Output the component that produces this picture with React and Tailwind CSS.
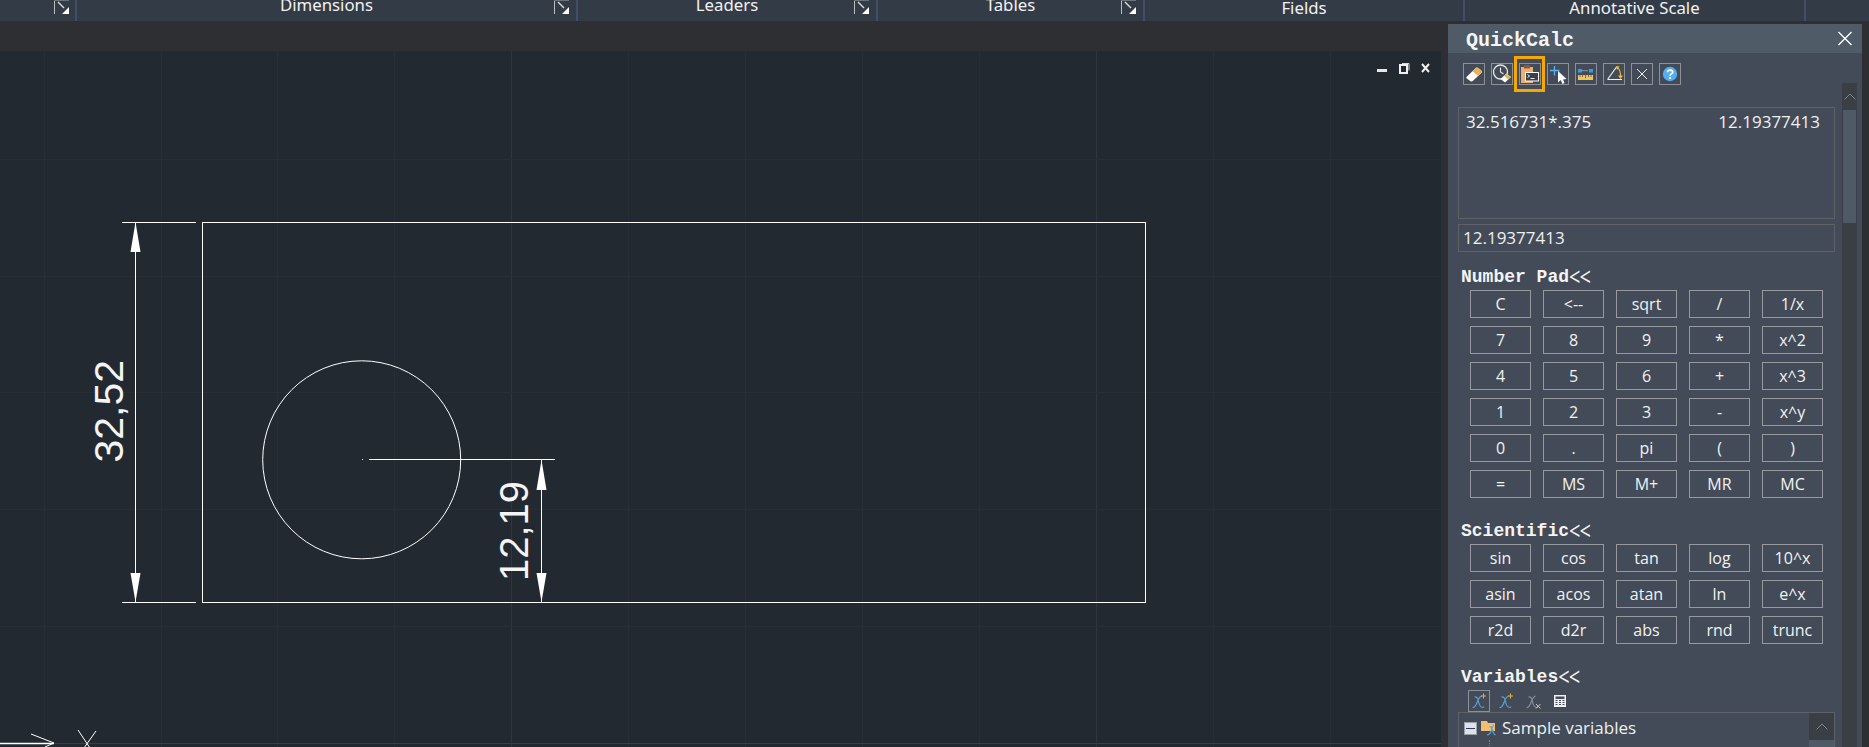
import React from 'react';

const ui = { fontFamily: '"Open Sans", "Noto Sans", sans-serif' };
const head = { fontFamily: '"Liberation Mono", monospace' };

const numberPad = [
  ['C', '<--', 'sqrt', '/', '1/x'],
  ['7', '8', '9', '*', 'x^2'],
  ['4', '5', '6', '+', 'x^3'],
  ['1', '2', '3', '-', 'x^y'],
  ['0', '.', 'pi', '(', ')'],
  ['=', 'MS', 'M+', 'MR', 'MC'],
];

const scientific = [
  ['sin', 'cos', 'tan', 'log', '10^x'],
  ['asin', 'acos', 'atan', 'ln', 'e^x'],
  ['r2d', 'd2r', 'abs', 'rnd', 'trunc'],
];

// dialog launcher in the ribbon panel titles
const Launcher = ({ className = 'right-[6px]' }) => (
  <svg width="16" height="15" viewBox="0 0 16 15" className={`absolute top-0 ${className}`}>
    <path d="M0.5 0V14" stroke="#b9bdc2" />
    <path d="M0 0.5H15" stroke="#6d737b" />
    <path d="M4 2L10 8" stroke="#d8dade" strokeWidth="1.4" />
    <path d="M15 7V14H8Z" fill="#fff" />
  </svg>
);

const RibbonCell = ({ w, label, launcher, launcherClass, low }) => (
  <div className={`relative h-full shrink-0 border-r-2 border-[#3f4f68] overflow-hidden ${w}`}>
    {label && (
      <div className={`text-center text-[16.8px] leading-[16px] text-[#f2f2f2] ${low ? 'pt-[0px]' : 'mt-[-3px]'}`}>
        {label}
      </div>
    )}
    {launcher && <Launcher className={launcherClass} />}
  </div>
);

// background grid + the drawing itself
const Drawing = () => {
  const xs = [44, 161, 277, 394, 511, 628, 745, 862, 979, 1096, 1213, 1330];
  const ys = [42, 159, 276, 392, 509, 626];
  const major = [511, 1096];
  const arrow = (x, tip, base) => `M${x} ${tip}L${x + 5} ${base}H${x - 5}Z`;
  return (
    <svg width="1441" height="696" viewBox="0 51 1441 696" className="block absolute left-0 top-0">
      {xs.map((x) => (
        <path key={x} d={`M${x + 0.5} 51V747`} stroke={major.includes(x) ? '#2e3640' : '#272e37'} />
      ))}
      {ys.map((y) => (
        <path key={y} d={`M0 ${y + 0.5}H1441`} stroke="#272e37" />
      ))}
      <path d="M0 743.5H1441" stroke="#363f4a" />

      <g stroke="#fff" fill="none" strokeWidth="1">
        <rect x="202.5" y="222.5" width="943" height="380" />
        <path d="M122 222.5H196M122 602.5H196M135.5 222V602" />
        <circle cx="361.7" cy="459.8" r="99" />
        <path d="M362 459.5H363M369 459.5H555M541.5 460V602" />
      </g>
      <g fill="#fff">
        <path d={arrow(135.5, 222, 252)} />
        <path d={arrow(135.5, 602, 573)} />
        <path d={arrow(541.5, 460, 490)} />
        <path d={arrow(541.5, 602, 573)} />
      </g>
      <text x="0" y="0" transform="translate(122.5 462.5) rotate(-90)" fill="#f4f4f4" fontSize="41" fontFamily="Liberation Sans">32,52</text>
      <text x="0" y="0" transform="translate(527.5 581) rotate(-90)" fill="#f4f4f4" fontSize="40" fontFamily="Liberation Sans">12,19</text>

      {/* UCS icon */}
      <g stroke="#fff" fill="none">
        <path d="M0 743.5H54" strokeWidth="1.5" />
        <path d="M31 734L54 743L45 747" />
        <path d="M78 730L90 748M96 731L84 748" />
      </g>
    </svg>
  );
};

const WindowControls = () => (
  <svg width="60" height="14" viewBox="0 0 60 14" className="absolute left-[1374px] top-[11px]">
    <rect x="3" y="7" width="10" height="3" fill="#e8e8e8" />
    <path d="M28 1.5H35V8.5" stroke="#d9d9d9" fill="none" />
    <rect x="26" y="3" width="7" height="8" fill="none" stroke="#f0f0f0" strokeWidth="2" />
    <path d="M48 2L55 10M55 2L48 10" stroke="#efefef" strokeWidth="2" fill="none" />
  </svg>
);

const ToolBtn = ({ children }) => (
  <div className="w-[22px] h-[22px] border border-[#8d9094] flex items-center justify-center">{children}</div>
);

const EraserIcon = () => (
  <svg width="20" height="20" viewBox="0 0 20 20">
    <path d="M2.5 13L11.5 4.2Q12.8 3 14.2 4L17.3 6.6Q18.5 7.8 17.3 9L9 16.8Q7.6 18 6.2 16.9L2.8 14.6Q1.7 13.8 2.5 13Z" fill="#fff" />
    <path d="M8.5 7.2L11.5 4.2Q12.8 3 14.2 4L17.3 6.6Q18.5 7.8 17.3 9L14.2 12Z" fill="#e4b35c" />
  </svg>
);

const ClockEraserIcon = () => (
  <svg width="20" height="20" viewBox="0 0 20 20">
    <circle cx="8.5" cy="8" r="7" fill="none" stroke="#e6e6e6" strokeWidth="1.3" />
    <path d="M8.5 3.5V8L11.5 10" fill="none" stroke="#e6e6e6" strokeWidth="1.1" />
    <path d="M8.5 15L14.5 9.5L19 13L13 18.5Z" fill="#fff" />
    <path d="M12 11.8L14.5 9.5L19 13L16.2 15.6Z" fill="#e4b35c" />
  </svg>
);

const ClipboardIcon = () => (
  <svg width="20" height="20" viewBox="0 0 20 20">
    <rect x="1" y="3" width="12" height="16" fill="#f0ad6e" />
    <rect x="4" y="1" width="6" height="3.5" fill="#8a5a3a" />
    <rect x="5.5" y="8.5" width="13" height="8.5" fill="#38414c" stroke="#fff" />
    <path d="M7.5 10.5L9.5 12L7.5 13.5M10.5 14.5H14.5" stroke="#fff" fill="none" strokeWidth="0.9" />
  </svg>
);

const PickIcon = () => (
  <svg width="20" height="20" viewBox="0 0 20 20">
    <path d="M6.5 2V11.5M2 6.5H11.5" stroke="#55b4f4" strokeWidth="1.3" />
    <path d="M10 7L18.5 15L15 15.5L16.5 19L14.5 20L12.7 16L10 18.5Z" fill="#fff" />
  </svg>
);

const RulerIcon = () => (
  <svg width="20" height="20" viewBox="0 0 20 20">
    <rect x="2" y="5" width="4" height="3.5" fill="#2f9fe8" />
    <rect x="13" y="5" width="4" height="3.5" fill="#2f9fe8" />
    <path d="M6.5 6.7H12.5" stroke="#e0e0e0" strokeDasharray="1 1" />
    <rect x="2" y="11" width="15" height="5" fill="#f2c45c" />
    <path d="M4 11V13M6.5 11V13M9.5 11V14M12.5 11V13M15 11V13" stroke="#6e5320" strokeWidth="0.8" />
  </svg>
);

const AngleIcon = () => (
  <svg width="20" height="20" viewBox="0 0 20 20">
    <path d="M3.5 15.5H18M3.5 15.5L12.5 3" stroke="#eee" fill="none" strokeWidth="1.2" />
    <path d="M13 3.5Q16.5 5 16.5 12" stroke="#e8b23a" fill="none" strokeWidth="1.1" />
    <path d="M12 2L15.5 2.5L13 6ZM14 11.5H19L16.5 15Z" fill="#eebb3f" />
  </svg>
);

const ThinX = () => (
  <svg width="14" height="14" viewBox="0 0 14 14">
    <path d="M2 2L12 12M12 2L2 12" stroke="#f0f0f0" />
  </svg>
);

const HelpIcon = () => (
  <svg width="16" height="16" viewBox="0 0 16 16">
    <circle cx="8" cy="8" r="7.2" fill="#55aef0" />
    <path d="M5.5 6.2C5.5 3.4 10.7 3.4 10.7 6.2C10.7 8 8 7.8 8 9.8" stroke="#fff" strokeWidth="1.7" fill="none" />
    <rect x="7.1" y="11" width="1.9" height="1.9" fill="#fff" />
  </svg>
);

const VarX = ({ plus, gray }) => (
  <svg width="16" height="16" viewBox="0 0 16 16">
    <path d="M1.5 14.5Q4 15 6 9.5T10.5 3M3.5 4Q6.5 3 7.5 8.5T11.5 14.5Q12.5 14.5 13 13.5" stroke={gray ? '#8a8f95' : '#5a9fd4'} strokeWidth="1.2" fill="none" />
    {plus && <path d="M12.5 0.5V5.5M10 3H15" stroke="#e8b23a" />}
    {gray && <path d="M11 11L15.5 15.5M15.5 11L11 15.5" stroke="#c9c9c9" />}
  </svg>
);

const CalcIcon = () => (
  <svg width="12" height="12" viewBox="0 0 12 12">
    <rect width="12" height="12" fill="#f2f2f2" />
    <rect x="1.5" y="1.5" width="9" height="2.5" fill="#424b57" />
    <path d="M1.5 5.5H3.5M5 5.5H7M8.5 5.5H10.5M1.5 7.5H3.5M5 7.5H7M8.5 7.5H10.5M1.5 9.5H3.5M5 9.5H7M8.5 9.5H10.5" stroke="#424b57" strokeWidth="1.2" />
  </svg>
);

const FolderVarIcon = () => (
  <svg width="16" height="16" viewBox="0 0 16 16">
    <path d="M0 1H6L7 3H14V11H0Z" fill="#f3bd74" />
    <path d="M6 15Q9 15 10.5 10T13 5M8.5 7Q11 6 11.5 10T14.5 15" stroke="#5a9fd4" strokeWidth="1.2" fill="none" />
  </svg>
);

const Chevron = () => (
  <svg width="12" height="7" viewBox="0 0 12 7">
    <path d="M0.5 6.5L6 1L11.5 6.5" stroke="#7d838a" fill="none" />
  </svg>
);

const Section = ({ title, className }) => (
  <div className={`h-[18px] flex items-center pl-[3px] text-[18px] leading-[18px] font-bold text-[#f4f4f4] ${className}`} style={head}>
    {title}
    <span className="inline-block scale-y-130 text-[20px] font-normal leading-[18px] tracking-[-1px]" style={ui}>&lt;&lt;</span>
  </div>
);

const KeyGrid = ({ rows }) => (
  <div className="grid grid-cols-5 gap-x-[12px] gap-y-[8px] ml-[12px] w-[353px] mt-[4px]">
    {rows.flat().map((k, i) => (
      <div key={i} className="h-[28px] border border-[#96999d] flex items-center justify-center text-[16px] text-[#f2f2f2]">
        {k}
      </div>
    ))}
  </div>
);

const QuickCalc = () => (
  <div className="relative w-[414px] mt-[3px] ml-[7px] mr-[7px] bg-[#424b57] overflow-hidden" style={ui}>
    <div className="h-[29px] bg-[#505b68] flex items-center justify-between pl-[18px] pr-[9px]">
      <span className="text-[20px] leading-[29px] pt-[3px] font-bold text-[#f6f6f6]" style={head}>QuickCalc</span>
      <svg width="16" height="15" viewBox="0 0 16 15">
        <path d="M1.5 1L14.5 14M14.5 1L1.5 14" stroke="#fff" strokeWidth="1.3" />
      </svg>
    </div>

    <div className="flex">
      <div className="w-[394px] shrink-0 pl-[10px]">
        <div className="flex gap-[6px] pl-[5px] mt-[10px] relative">
          <ToolBtn><EraserIcon /></ToolBtn>
          <ToolBtn><ClockEraserIcon /></ToolBtn>
          <ToolBtn><ClipboardIcon /></ToolBtn>
          <ToolBtn><PickIcon /></ToolBtn>
          <ToolBtn><RulerIcon /></ToolBtn>
          <ToolBtn><AngleIcon /></ToolBtn>
          <ToolBtn><ThinX /></ToolBtn>
          <ToolBtn><HelpIcon /></ToolBtn>
          {/* highlight frame */}
          <div className="absolute left-[56px] top-[-7px] w-[31px] h-[36px] border-[3px] border-[#f5a800]" />
        </div>

        <div className="mt-[22px] w-[377px] h-[112px] border border-[#5e6165] flex justify-between items-start pl-[7px] pr-[14px] pt-[2px] text-[17px] leading-[24px] text-[#f0f0f0]">
          <span>32.516731*.375</span>
          <span>12.19377413</span>
        </div>
        <div className="mt-[5px] w-[377px] h-[28px] border border-[#5e6165] pl-[4px] text-[17px] leading-[26px] text-[#f0f0f0]">
          12.19377413
        </div>

        <Section title="Number Pad" className="mt-[16px]" />
        <KeyGrid rows={numberPad} />

        <Section title="Scientific" className="mt-[24px]" />
        <KeyGrid rows={scientific} />

        <Section title="Variables" className="mt-[24px]" />

        <div className="flex items-center h-[22px] mt-[4px] ml-[10px]">
          <div className="w-[22px] h-[22px] border border-[#8d9094] flex items-center justify-center"><VarX plus /></div>
          <div className="w-[27px] ml-[2px] flex justify-center"><VarX plus /></div>
          <div className="w-[27px] flex justify-center"><VarX gray /></div>
          <div className="w-[27px] flex justify-center"><CalcIcon /></div>
        </div>

        <div className="w-[377px] h-[60px] border border-[#5e6165] flex">
          <div className="flex-1 relative">
            <div className="flex items-center h-[24px] mt-[3px] pl-[5px]">
              <div className="w-[13px] h-[13px] bg-[#dfe3e8] border border-[#9aa0a6] flex items-center justify-center">
                <div className="w-[9px] h-[1px] bg-[#2c3a66]" />
              </div>
              <div className="ml-[4px]"><FolderVarIcon /></div>
              <span className="ml-[5px] text-[17px] text-[#f0f0f0]">Sample variables</span>
            </div>
            <div className="absolute left-[30px] top-[27px] h-[8px] border-l border-dotted border-[#7d838a]" />
          </div>
          <div className="w-[25px] bg-[#3a3e45]">
            <div className="h-[27px] flex items-center justify-center"><Chevron /></div>
            <div className="h-full bg-[#4f5a66]" />
          </div>
        </div>
      </div>

      {/* panel scrollbar */}
      <div className="w-[15px] h-[664px] mt-[30px] shrink-0 bg-[#3a3e45]">
        <div className="h-[27px] flex items-center justify-center pl-[1px]"><Chevron /></div>
        <div className="mx-[1px] h-[113px] bg-[#4f5a66]" />
      </div>
    </div>
  </div>
);

export default function App() {
  return (
    <div className="w-[1869px] h-[747px] overflow-hidden bg-[#2d2f33] flex flex-col">
      <div className="h-[21px] shrink-0 bg-[#333b47] flex">
        <RibbonCell w="w-[77px]" launcher launcherClass="right-[5px]" />
        <RibbonCell w="w-[501px]" label="Dimensions" launcher />
        <RibbonCell w="w-[300px]" label="Leaders" launcher />
        <RibbonCell w="w-[267px]" label="Tables" launcher />
        <RibbonCell w="w-[320px]" label="Fields" low />
        <RibbonCell w="w-[341px]" label="Annotative Scale" low />
        <div className="flex-1" />
      </div>

      <div className="flex-1 flex min-h-0">
        <div className="w-[1441px] shrink-0 flex flex-col">
          <div className="h-[30px] shrink-0" />
          <div className="relative flex-1 bg-[#222931] overflow-hidden">
            <Drawing />
            <WindowControls />
          </div>
        </div>
        <QuickCalc />
      </div>
    </div>
  );
}
